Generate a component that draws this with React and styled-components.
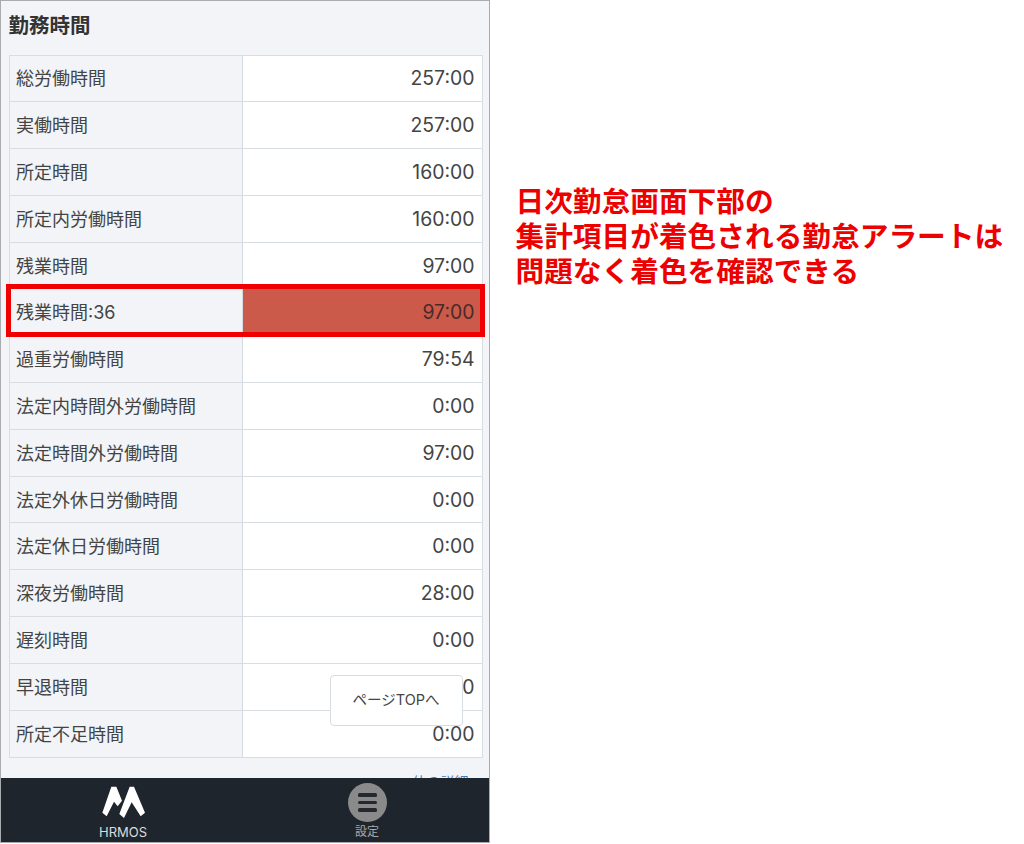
import React from 'react';
import styled, { createGlobalStyle } from 'styled-components';

const ROWS = [
  ['総労働時間', '257:00'],
  ['実働時間', '257:00'],
  ['所定時間', '160:00'],
  ['所定内労働時間', '160:00'],
  ['残業時間', '97:00'],
  ['残業時間:36', '97:00', true],
  ['過重労働時間', '79:54'],
  ['法定内時間外労働時間', '0:00'],
  ['法定時間外労働時間', '97:00'],
  ['法定外休日労働時間', '0:00'],
  ['法定休日労働時間', '0:00'],
  ['深夜労働時間', '28:00'],
  ['遅刻時間', '0:00'],
  ['早退時間', '0:00'],
  ['所定不足時間', '0:00'],
];

const App = () => (
  <>
    <GlobalStyle />
    <Page>
      <Phone>
        <Main>
          <Title>勤務時間</Title>
          <Table>
            {ROWS.map(([label, value, alert]) => (
              <Row key={label} $alert={alert}>
                <Label>{label}</Label>
                <Value $alert={alert}>{value}</Value>
              </Row>
            ))}
          </Table>
          <MoreLink>体の詳細へ</MoreLink>
        </Main>
        <TopButton>ページTOPへ</TopButton>
        <Footer>
          <FooterItem>
            <LogoIcon viewBox="-4 0 156 120">
              <path d="M39 14 L54 14 L71 56 L58 73 L47 59 L25 103 L12 92 Z" fill="#fff" />
              <path d="M94 14 L107 14 L140 92 L127 103 L100 61 L77 108 L63 96 Z" fill="#fff" />
            </LogoIcon>
            <FooterLabel>HRMOS</FooterLabel>
          </FooterItem>
          <FooterItem>
            <MenuCircle>
              <MenuBar />
              <MenuBar />
              <MenuBar />
            </MenuCircle>
            <FooterLabel $muted>設定</FooterLabel>
          </FooterItem>
        </Footer>
      </Phone>
      <Note>
        日次勤怠画面下部の
        <br />
        集計項目が着色される勤怠アラートは
        <br />
        問題なく着色を確認できる
      </Note>
    </Page>
  </>
);

export default App;

const GlobalStyle = createGlobalStyle`
  html, body {
    margin: 0;
    padding: 0;
    background: #fff;
  }
  body {
    font-family: Inter, "Noto Sans CJK JP", sans-serif;
  }
`;

const Page = styled.div`
  display: flex;
  align-items: flex-start;
  width: 1024px;
  height: 844px;
  overflow: hidden;
  background: #fff;
`;

const Phone = styled.div`
  position: relative;
  display: flex;
  flex-direction: column;
  flex: none;
  box-sizing: border-box;
  width: 490px;
  height: 843px;
  border: 1.5px solid #a9acae;
  background: #f2f4f7;
`;

const Main = styled.div`
  flex: 1;
  min-height: 0;
  overflow: hidden;
  padding: 0 6.5px 0 7.5px;
`;

const Title = styled.h2`
  margin: 0;
  height: 53.5px;
  line-height: 50px;
  font-size: 20.5px;
  font-weight: 700;
  color: #333;
`;

const Table = styled.div`
  display: flex;
  flex-direction: column;
  border: 1px solid #d8dde2;
  border-bottom-width: 1.5px;
  background: #fff;
`;

const Row = styled.div`
  position: relative;
  display: grid;
  grid-template-columns: 233px 1fr;
  height: 46.8px;
  box-sizing: border-box;
  border-bottom: 1px solid #d8dde2;
  &:last-child {
    border-bottom: 0;
  }
  ${(p) =>
    p.$alert &&
    `
    &::after {
      content: '';
      position: absolute;
      z-index: 1;
      left: -4px;
      right: -3px;
      top: -5px;
      bottom: -2px;
      border: 5px solid #f00000;
      pointer-events: none;
    }
  `}
`;

const Label = styled.div`
  display: flex;
  align-items: center;
  padding: 0 0 2px 6.5px;
  background: #f2f4f7;
  border-right: 1px solid #d3dbe3;
  font-size: 18px;
  color: #444;
`;

const Value = styled.div`
  display: flex;
  align-items: center;
  justify-content: flex-end;
  padding-right: 7px;
  background: ${(p) => (p.$alert ? '#cb5a4a' : '#fff')};
  font-size: 19.4px;
  color: ${(p) => (p.$alert ? '#4a2a26' : '#444')};
`;

const MoreLink = styled.div`
  margin-top: 14px;
  text-align: right;
  font-size: 14px;
  line-height: 20px;
  color: #3d7fc1;
`;

const TopButton = styled.div`
  position: absolute;
  left: 328.5px;
  top: 673.5px;
  display: flex;
  align-items: center;
  justify-content: center;
  box-sizing: border-box;
  width: 133px;
  height: 51px;
  padding-bottom: 3px;
  background: #fff;
  border: 1px solid #d8dde2;
  border-radius: 4px;
  font-size: 14.5px;
  color: #444;
`;

const Footer = styled.div`
  display: grid;
  grid-template-columns: 1fr 1fr;
  flex: none;
  height: 64px;
  background: #1f252d;
`;

const FooterItem = styled.div`
  display: flex;
  flex-direction: column;
  align-items: center;
  justify-content: flex-end;
  padding-bottom: 2px;
`;

const LogoIcon = styled.svg`
  width: 52px;
  height: 40px;
  margin-bottom: 2px;
`;

const MenuCircle = styled.div`
  display: flex;
  flex-direction: column;
  align-items: center;
  justify-content: center;
  gap: 4px;
  width: 39px;
  height: 39px;
  margin-bottom: 2px;
  border-radius: 50%;
  background: #8a8a8a;
`;

const MenuBar = styled.span`
  display: block;
  width: 19px;
  height: 3.5px;
  border-radius: 1.5px;
  background: #25292f;
`;

const FooterLabel = styled.div`
  font-size: ${(p) => (p.$muted ? '12px' : '13px')};
  line-height: 16px;
  color: ${(p) => (p.$muted ? '#a8a8a8' : '#dcdcdc')};
`;

const Note = styled.div`
  margin: 181.5px 0 0 25.5px;
  white-space: nowrap;
  font-family: "Noto Sans CJK JP", sans-serif;
  font-size: 28.7px;
  line-height: 35px;
  font-weight: 700;
  color: #ec0000;
`;
